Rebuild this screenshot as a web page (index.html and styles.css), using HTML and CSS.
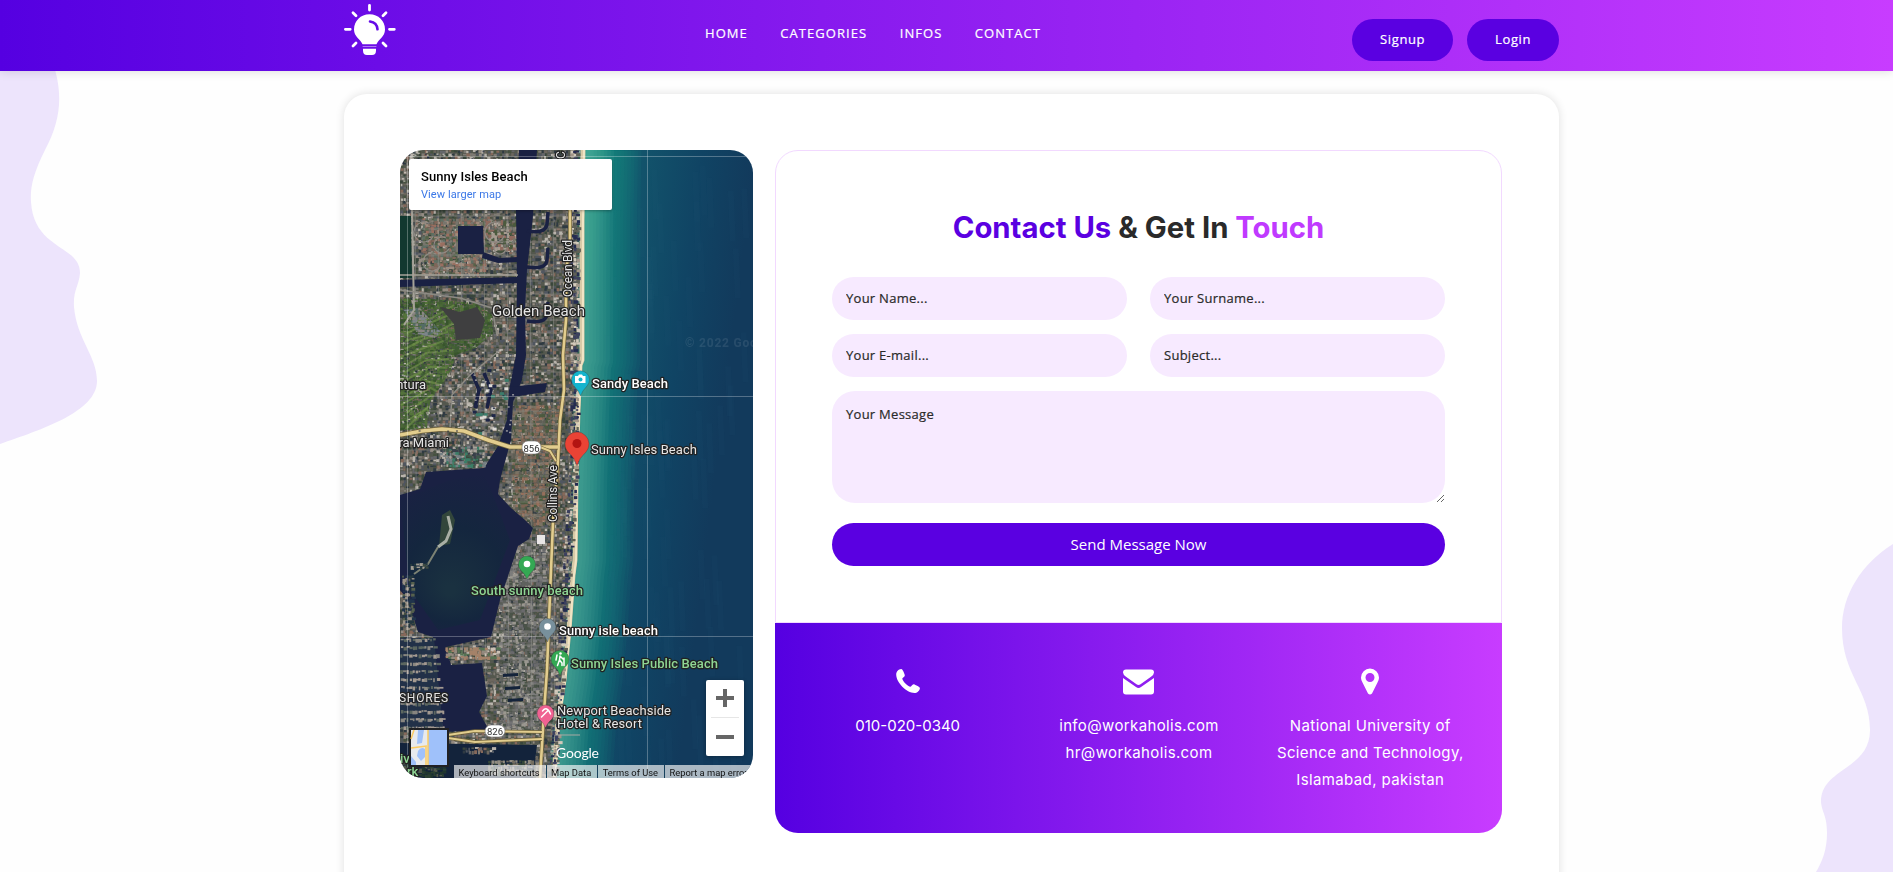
FILE: index.html
```html
<!DOCTYPE html>
<html lang="en">
<head>
<meta charset="utf-8">
<title>Contact Us</title>
<link rel="stylesheet" href="styles.css">
</head>
<body>
<svg class="blobs" viewBox="0 0 1893 872" aria-hidden="true">
  <path d="M0 60H52C63 92 62 118 45 150C33 174 30 188 31 202C34 250 80 245 80 273C79 286 73 290 74 307C77 340 97 356 97 381C97 412 40 430 0 444Z"/>
  <path d="M1893 544C1860 565 1842 596 1842 628C1842 675 1870 690 1870 730C1870 770 1821 768 1821 802C1822 813 1827 815 1827 833C1827 850 1822 862 1816 872H1893Z"/>
</svg>
<header class="header">
  <div class="header-inner">
    <svg class="logo" viewBox="0 0 52 58" aria-label="Logo">
      <g stroke="#fff" stroke-width="2.8" stroke-linecap="round">
        <path d="M25.500 5.300V10M9 12.800L12 15.800M42 12.800L39 15.800M1.400 29.300H6.200M45.500 29.300H50.300M9 46L12 43M42 46L39 43"/>
      </g>
      <path fill="#fff" d="M25.500 14.300C16.500 14.300 10 21 10 29.500C10 37 16.500 39 18.500 44.300H32.500C34.500 39 41 37 41 29.500C41 21 34.500 14.300 25.500 14.300ZM19 48.700H32V50.500Q32 55 28 55H23Q19 55 19 50.500Z"/>
      <path d="M18.600 46.500H32.400" stroke="#fff" stroke-opacity=".45" stroke-width="1"/>
      <path d="M26 21.500Q33 22.500 33.500 29.300" fill="none" stroke="#650ae7" stroke-width="2.600" stroke-linecap="round"/>
    </svg>
    <nav class="nav"><a>HOME</a><a>CATEGORIES</a><a>INFOS</a><a>CONTACT</a></nav>
    <div class="actions"><a class="pill">Signup</a><a class="pill">Login</a></div>
  </div>
</header>
<main class="card">
  <section class="map">
    <canvas class="terrain" id="terrain" width="353" height="628"></canvas>
    <svg class="overlay" viewBox="0 0 353 628">
      <path class="grid" d="M0 6.500H353M0 246.500H353M0 486.500H353M7.500 0V628M247.500 0V628"/>
      <g class="label">
        <text x="92" y="166" font-size="15" textLength="93">Golden Beach</text>
        <text transform="translate(172 147) rotate(-90)" font-size="12" textLength="57">Ocean Blvd</text>
        <text transform="translate(165 9) rotate(-90)" font-size="12">C</text>
        <text transform="translate(157 372) rotate(-90)" font-size="12" textLength="57">Collins Ave</text>
        <text x="26" y="239" text-anchor="end">ntura</text>
        <text x="49" y="297" text-anchor="end">ra Miami</text>
        <text x="49" y="552" text-anchor="end" font-size="12" letter-spacing=".8">SHORES</text>
        <text class="strong" x="192" y="238" textLength="76">Sandy Beach</text>
        <text x="191" y="304" textLength="106">Sunny Isles Beach</text>
        <text class="park" x="71" y="445" textLength="112">South sunny beach</text>
        <text class="strong" x="159" y="485" textLength="99">Sunny isle beach</text>
        <text class="park" x="171" y="518" textLength="147">Sunny Isles Public Beach</text>
        <text x="157" y="565" textLength="114">Newport Beachside</text>
        <text x="157" y="578" textLength="85">Hotel &amp; Resort</text>
        <text class="park" x="0" y="613">iv</text>
        <text class="park" x="7" y="626">rk</text>
      </g>
      <text class="watermark" x="285" y="197">© 2022 Goo</text>
      <g class="shield"><rect x="122" y="291" width="19" height="13" rx="6"/><text x="131.500" y="301.500">856</text><rect x="85" y="575" width="20" height="12" rx="6"/><text x="95" y="585">826</text></g>
      <g stroke="#333" stroke-opacity=".5" stroke-width=".6">
        <path fill="#14b4cd" d="M180.500 246Q179 241 174 236A9 9 0 1 1 187 236Q182 241 180.500 246Z"/>
        <path fill="#ea4335" d="M177 316Q175 308 168 302A12 12 0 1 1 186 302Q179 308 177 316Z"/>
        <path fill="#34a853" d="M127 429Q125 424 120.500 420A8.500 8.500 0 1 1 133.500 420Q129 424 127 429Z"/>
        <path fill="#78909c" d="M147.500 492Q146 487 141 482.500A8.500 8.500 0 1 1 154 482.500Q149 487 147.500 492Z"/>
        <path fill="#34a853" d="M160 526Q158.500 520 153.500 515.500A9 9 0 1 1 166.500 515.500Q161.500 520 160 526Z"/>
        <path fill="#f06292" d="M145.500 578Q144 573 139 569A8.500 8.500 0 1 1 152 569Q147 573 145.500 578Z"/>
      </g>
      <circle cx="177" cy="293.500" r="4.500" fill="#b31412"/>
      <circle cx="127" cy="414" r="3.300" fill="#fff"/><circle cx="147.500" cy="476.500" r="3.300" fill="#fff"/>
      <path fill="#fff" d="M175 226H178L179 224.500H182L183 226H185.500V233H175Z"/><circle cx="180.500" cy="229.500" r="2" fill="#14b4cd"/>
      <g fill="none" stroke="#fff" stroke-width="1.500" stroke-linecap="round"><path d="M160 506L159.500 510L162 513V515.500M159.500 510L157.500 515.500M160 506L163 509M164 508V515.500M157 505L156 510"/><path d="M141.500 567L147.500 561M142.500 561Q147 555.500 150.500 564"/></g>
      <circle cx="160.500" cy="503.500" r="1.300" fill="#fff"/>
      <text class="google" x="156" y="608" textLength="43">Google</text>
      <g class="thumb"><rect x="10" y="579" width="38" height="37" fill="#9fc1fa" stroke="#202124" stroke-width="2"/><path fill="#e8eaed" d="M11 580H28V615H11Z"/><path fill="#9fc1fa" d="M18 580H24L22 593L17 594ZM18 601Q21 596 25 599V607L21 611L17 606ZM11 606L16 612V615H11Z"/><path fill="none" stroke="#fbcb62" stroke-width="1.500" d="M28 580V615M11 598L27 596M14 580L11 589M26 597V615"/></g>
    </svg>
    <div class="place"><strong>Sunny Isles Beach</strong><a>View larger map</a></div>
    <div class="zoom"><i class="plus"></i><hr><i class="minus"></i></div>
    <div class="legal"><span>Keyboard shortcuts</span><span>Map Data</span><span>Terms of Use</span><span>Report a map error</span></div>
  </section>
  <section class="contact">
    <form class="form">
      <h2 class="title"><span class="violet">Contact Us</span> &amp; Get In <span class="pink">Touch</span></h2>
      <div class="fields">
        <input placeholder="Your Name..."><input placeholder="Your Surname...">
        <input placeholder="Your E-mail..."><input placeholder="Subject...">
        <textarea placeholder="Your Message"></textarea>
      </div>
      <button class="send" type="button">Send Message Now</button>
    </form>
    <div class="info">
      <div class="info-item">
        <svg viewBox="0 0 24 24"><path d="M.2 5.500C.2 3 2.500.1 5.200.1C6.700.1 8.800 5.500 8.800 6.400C8.800 8 6.300 8.500 6.300 9.500C6.300 12 12 17.700 14.500 17.700C15.500 17.700 16 15.200 17.600 15.200C18.500 15.200 23.900 17.900 23.900 18.900C23.900 21.800 21 23.900 18.500 23.900C10.500 23.900.2 13.500.2 5.500Z"/></svg>
        <p class="phone">010-020-0340</p>
      </div>
      <div class="info-item">
        <svg class="mail" viewBox="0 0 31 25"><path d="M0 8.500L13 17.600Q15.500 19.300 18 17.600L31 8.500V22Q31 25 28 25H3Q0 25 0 22ZM3 0H28Q31 0 31 3Q31 5 28 7.300L17.500 14.700Q15.500 16.300 13.500 14.700L3 7.300Q0 5 0 3Q0 0 3 0Z"/></svg>
        <p class="email">info@workaholis.com<br>hr@workaholis.com</p>
      </div>
      <div class="info-item">
        <svg class="pin" viewBox="0 0 18 26"><path fill-rule="evenodd" d="M9 0A9 9 0 0 0 0 9C0 11 1 13 1.500 14L7 25Q9 27 11 25L16.500 14C17 13 18 11 18 9A9 9 0 0 0 9 0ZM9 4.500A4.500 4.500 0 1 1 9 13.500A4.500 4.500 0 0 1 9 4.500Z"/></svg>
        <p class="address">National University of<br>Science and Technology,<br>Islamabad, pakistan</p>
      </div>
    </div>
  </section>
</main>
<script src="terrain.js"></script>
</body>
</html>
```
FILE: styles.css
```css
* { box-sizing: border-box; }
body { margin: 0; height: 872px; overflow: hidden; background: #fefefe; font-family: "Open Sans", sans-serif; position: relative; }
.blobs { position: absolute; inset: 0; width: 1893px; height: 872px; fill: #ede4fc; }
.header { position: relative; height: 71px; background: linear-gradient(90deg, #5500e1 0%, #c83cff 100%); box-shadow: 0 0 10px rgba(0,0,0,.15); }
.header-inner { width: 1215px; margin-left: 344px; display: flex; align-items: flex-start; }
.logo { width: 52px; height: 58px; }
.nav { display: flex; gap: 32.500px; margin-left: 309px; padding-top: 23px; color: #fff; font-size: 13px; line-height: 20px; font-weight: 500; letter-spacing: 1.050px; -webkit-text-stroke: .2px #fff; }
.actions { display: flex; gap: 14px; margin-left: auto; padding-top: 19px; }
.pill { height: 42px; padding: 0 28px; border-radius: 23px; background: #5a00e1; color: #fff; font-size: 13px; font-weight: 500; line-height: 40px; letter-spacing: .6px; -webkit-text-stroke: .2px #fff; }
.card { position: relative; width: 1215px; height: 900px; margin: 23px 0 0 344px; padding: 56px; border-radius: 23px; background: #fff; box-shadow: 0 0 10px rgba(0,0,0,.12); display: flex; gap: 22px; align-items: flex-start; }
.map { position: relative; width: 353px; height: 628px; border-radius: 23px; overflow: hidden; font-family: Roboto, sans-serif; }
.terrain { display: block; }
.overlay { position: absolute; inset: 0; width: 353px; height: 628px; }
.grid { stroke: rgba(255,255,255,.28); fill: none; }
.label { fill: #e6e6e6; stroke: #222; stroke-width: 2.5px; paint-order: stroke; stroke-linejoin: round; font-size: 13px; }
.strong { fill: #fff; font-weight: 500; }
.park { fill: #8fd694; font-weight: 500; }
.watermark { fill: #fff; opacity: .09; font-size: 12px; font-weight: 700; letter-spacing: .8px; }
.shield rect { fill: #fff; stroke: #777; stroke-width: .6px; }
.shield text { font-size: 9.500px; text-anchor: middle; fill: #333; }
.google { fill: #fff; font: 14px Lato, sans-serif; }
.place { position: absolute; left: 9px; top: 9px; width: 203px; height: 51px; padding: 9px 12px; background: #fff; border-radius: 2px; box-shadow: 0 1px 3px rgba(0,0,0,.3); display: flex; flex-direction: column; }
.place strong { font-size: 13px; line-height: 17px; font-weight: 500; color: #000; letter-spacing: .05px; }
.place a { font-size: 11px; line-height: 19px; color: #3b78e7; letter-spacing: .08px; }
.zoom { position: absolute; left: 306px; top: 530px; width: 38px; height: 76px; padding: 9px 5px 10px; border-radius: 2px; background: #fff; box-shadow: 0 1px 4px rgba(0,0,0,.3); display: flex; flex-direction: column; justify-content: space-between; align-items: center; }
.zoom hr { width: 28px; margin: 0; border: 0; border-top: 1px solid #e6e6e6; }
.plus, .minus { width: 18px; height: 18px; background: linear-gradient(#666,#666) center/18px 4px no-repeat; }
.plus { background: linear-gradient(#666,#666) center/18px 4px no-repeat, linear-gradient(#666,#666) center/4px 18px no-repeat; }
.legal { position: absolute; left: 54px; top: 615px; right: 0; height: 13px; display: flex; white-space: nowrap; overflow: hidden; font-size: 9.350px; line-height: 15px; color: #111; background: rgba(245,245,245,.68); }
.legal span { padding: 0 6px 0 4.500px; border-right: 1px solid #16415c; }
.contact { width: 727px; }
.form { height: 473px; border: 1px solid #f2d9ff; border-radius: 23px 23px 0 0; padding: 56px 56px 0; }
.title { margin: 0 0 30px; height: 40px; text-align: center; font: 700 29.300px/41px Inter, sans-serif; color: #2a2a2a; white-space: nowrap; }
.violet { color: #5a00e1; }
.pink { color: #c03aff; }
.fields { display: grid; grid-template-columns: 295px 295px; gap: 14px 23px; }
.fields input, .fields textarea { width: 100%; height: 43px; border: 0; border-radius: 23px; padding: 0 14px 2px; background: #f7eaff; color: #2a2a2a; font: 500 13px "Open Sans", sans-serif; letter-spacing: .27px; }
.fields textarea { grid-column: span 2; height: 112px; padding: 14px; display: block; }
.fields ::placeholder { color: #2a2a2a; opacity: 1; -webkit-text-stroke: .2px #2a2a2a; }
.send { display: block; width: 100%; height: 43px; margin-top: 20px; padding-bottom: 3px; border: 0; border-radius: 23px; background: #5a00e1; color: #fff; font: 15px "Open Sans", sans-serif; }
.info { height: 210px; padding: 44px 16px 0 17px; display: grid; grid-template-columns: repeat(3, 1fr); border-radius: 0 0 23px 23px; background: linear-gradient(90deg, #5500e1 0%, #c83cff 100%); text-align: center; color: #fff; }
.info-item { display: flex; flex-direction: column; align-items: center; }
.info-item svg { width: 24px; height: 26px; margin-top: 1px; fill: #fff; }
.info-item .mail { width: 31px; height: 28px; }
.info-item .pin { width: 18px; height: 27px; }
.info-item p { margin: 0; padding-top: 18px; font: 15px/27px Inter, sans-serif; white-space: nowrap; }
.info-item .email { padding-top: 16px; letter-spacing: .37px; }
.info-item .address { padding-top: 17px; letter-spacing: .38px; }
```
FILE: terrain.js
```js
const ctx = document.getElementById('terrain').getContext('2d');
let seed = 7;
const rnd = () => (seed = (seed * 16807) % 2147483647) / 2147483647;
const pick = list => list[Math.floor(rnd() * list.length)];
const trace = (pts, close) => {
  ctx.beginPath();
  pts.forEach(([x, y], i) => i ? ctx.lineTo(x, y) : ctx.moveTo(x, y));
  if (close) ctx.closePath();
};
const fill = (color, pts) => { trace(pts, true); ctx.fillStyle = color; ctx.fill(); };
const line = (color, width, pts) => {
  trace(pts); ctx.strokeStyle = color; ctx.lineWidth = width; ctx.lineJoin = 'round'; ctx.stroke();
};
// Small rooftops, trees and pavements
const roofs = ['#7f7b74', '#6c665e', '#948b82', '#54584e', '#46523f', '#65666a', '#39463b', '#b9b4ac', '#86695b', '#505660', '#2f3a42'];
const blocks = (x0, y0, w, h, colors) => {
  for (let y = y0; y < y0 + h; y += 3)
    for (let x = x0; x < x0 + w; x += 3) {
      ctx.fillStyle = pick(colors);
      ctx.fillRect(x + rnd(), y + rnd(), 1.5 + rnd() * 3, 1.5 + rnd() * 2.5);
    }
};
ctx.fillStyle = '#55584f'; ctx.fillRect(0, 0, 353, 628);
blocks(0, 0, 190, 628, roofs);
blocks(22, 68, 62, 55, ['#9a6f60', '#7f675a', '#566449', '#77756c', '#a08b7c', '#5f6f63']);
blocks(85, 70, 31, 30, ['#8f6a5e', '#77756c', '#4c5b3e', '#a79c90']);
blocks(112, 255, 48, 120, ['#96705c', '#7d6453', '#4c5b3f', '#7b7263', '#5f5f55']);
blocks(100, 390, 45, 190, ['#7c7c7b', '#5f625e', '#4a5348', '#9a978f', '#6a6a6c']);
for (let y = 14; y < 628; y += 13) line('rgba(145,145,140,.5)', 1, [[y % 3 * 20, y], [165, y]]);
for (let x = 15; x < 165; x += 23) line('rgba(145,145,140,.5)', 1, [[x, 0], [x + 2, 628]]);
// Winding residential streets
for (const [x, y, r] of [[24, 82, 10], [42, 95, 8], [32, 112, 9], [95, 82, 10], [100, 98, 6]]) {
  ctx.beginPath(); ctx.arc(x, y, r, .4, 5.2); ctx.strokeStyle = '#908b85'; ctx.lineWidth = 1.2; ctx.stroke();
}
// Parks and golf course
fill('#12382f', [[0, 66], [11, 66], [12, 128], [0, 128]]);
const green = [[0, 148], [30, 149], [75, 153], [92, 165], [93, 184], [75, 198], [56, 205], [50, 222], [38, 240], [30, 252], [27, 278], [0, 281]];
ctx.save(); trace(green, true); ctx.clip();
blocks(0, 145, 100, 140, ['#456333', '#38552c', '#54743a', '#3f5c35', '#4b6837']);
for (let i = 0; i < 14; i++) line('rgba(125,160,80,.5)', 2, [[rnd() * 8, 175 + i * 8], [22 + rnd() * 16, 168 + i * 7], [42 + rnd() * 14, 155 + i * 9]]);
ctx.restore();
fill('#3f3f40', [[40, 157], [60, 162], [77, 157], [85, 170], [80, 188], [56, 190], [54, 174]]);
ctx.save(); trace([[4, 160], [20, 158], [41, 182], [35, 188], [18, 184]], true); ctx.clip();
blocks(0, 155, 45, 35, ['#7d858a', '#536b66', '#8a8683']); ctx.restore();
// Waterways
const water = '#1a2143';
fill(water, [[119, 0], [137, 0], [133, 65], [131, 85], [127, 120], [125, 160], [126, 205], [122, 230], [113, 252], [111, 290], [100, 330], [98, 344], [111, 358], [125, 370], [133, 378], [129, 389], [118, 396], [112, 414], [100, 450], [91, 487], [46, 497], [51, 515], [82, 513], [87, 546], [79, 562], [89, 580], [43, 582], [33, 487], [18, 482], [8, 450], [0, 440], [0, 345], [20, 339], [26, 322], [84, 318], [98, 296], [107, 270], [109, 240], [116, 205], [117, 130], [116, 60]]);
const lagoon = ctx.createRadialGradient(50, 440, 5, 60, 410, 90);
lagoon.addColorStop(0, '#1a3140'); lagoon.addColorStop(.5, '#14263e'); lagoon.addColorStop(1, '#1a2143');
fill(lagoon, [[0, 350], [50, 330], [85, 325], [95, 350], [110, 390], [80, 470], [38, 480], [10, 440]]);
fill(water, [[58, 76], [83, 76], [84, 104], [58, 104]]);
fill(water, [[0, 130], [118, 127], [118, 133], [0, 137]]);
fill(water, [[83, 102], [100, 108], [118, 107], [118, 112], [98, 113], [82, 108]]);
fill(water, [[110, 237], [147, 233], [145, 242], [113, 247]]);
// Hooked inlets east of the channel
for (const y of [62, 98, 152]) {
  ctx.beginPath(); ctx.moveTo(127, y + 19); ctx.quadraticCurveTo(146, y + 22, 147, y + 12); ctx.lineTo(148, y);
  ctx.strokeStyle = water; ctx.lineWidth = 3.5; ctx.stroke();
}
for (const x of [72, 84]) line(water, 3.5, [[x, 223], [x + 7, 240], [x + 3, 258]]);
for (let i = 0; i < 26; i++) { ctx.fillStyle = pick(['#1e2748', '#dcdad5', '#3d7d6c']); ctx.fillRect(72 + rnd() * 34, 215 + rnd() * 68, 4, 3); }
fill('#13233b', [[0, 593], [137, 595], [133, 628], [0, 628]]);
blocks(62, 597, 32, 5, roofs); blocks(88, 610, 45, 13, ['#344638', '#746e61', '#928d82']); blocks(0, 606, 44, 20, ['#20362f', '#2b4132', '#53594c']);
// Shoreline neighbourhoods around the lagoon
blocks(40, 296, 45, 20, ['#758084', '#3e584b', '#3b7d67', '#a8a29b', '#39414b']);
blocks(2, 425, 12, 52, ['#9a9286', '#56614e', '#243740', '#20344c']);
fill('#223148', [[0, 488], [34, 488], [43, 578], [0, 578]]);
for (let y = 488; y < 578; y += 8) blocks(0, y, 35 + (y - 488) / 10, 3, ['#888680', '#5c6760', '#a49a91']);
for (const [x, y] of [[103, 524], [105, 537], [108, 549]]) fill('#14233a', [[x, y], [x + 15, y - 1], [x + 15, y + 2], [x, y + 3]]);
blocks(45, 497, 52, 10, ['#cbc0b5', '#938a7f', '#557453', '#a48269']);
fill('#32463b', [[42, 365], [50, 360], [55, 370], [50, 394], [39, 396]]);
line('#a9afa4', 3, [[48, 366], [51, 379], [46, 391], [38, 397]]);
line('#7c8274', 2, [[38, 397], [28, 414], [14, 424]]);
blocks(10, 413, 18, 6, ['#3d4b43', '#a29d92', '#263b40']);
// Sea, beach and shallow water
const coast = [[183, 0], [182, 70], [182, 210], [180, 215], [178, 260], [176, 330], [175, 410], [173, 425], [169, 480], [164, 530], [158, 570], [154, 628]];
const sea = ctx.createLinearGradient(175, 0, 353, 22);
[[0, '#56a390'], [.06, '#2a9486'], [.15, '#168079'], [.22, '#136670'], [.38, '#12536b'], [.7, '#104464'], [1, '#123a5c']].forEach(([p, c]) => sea.addColorStop(p, c));
fill(sea, [...coast, [353, 628], [353, 0]]);
for (let i = 16; i > 0; i--) {
  ctx.globalAlpha = .09;
  line(i > 8 ? '#148e84' : '#62bfa5', i * 4, coast.map(([x, y]) => [x + 4 + i * 1.4, y]));
}
ctx.globalAlpha = 1;
line('#d8caa7', 5, coast);
line('#f1e4c5', 2, coast.map(([x, y]) => [x + 1, y]));
for (let y = 0; y < 625; y += 7) {
  const x = 170 - Math.max(0, y - 300) * .065;
  blocks(x, y, 7, 4, ['#d2c9ba', '#a09588', '#3c405f', '#5f6156', '#252c50']);
}
for (let i = 0; i < 90; i++) {
  const x = 205 + rnd() * 140, y = rnd() * 600;
  line('rgba(70,140,150,.03)', 6, [[x, y], [x + 2, y + 50]]);
}
// Roads
line('#a5a298', 2, [[12, 60], [14, 160], [4, 175]]);
line('#a5a298', 1.5, [[0, 125], [118, 125]]);
line('#8d8b84', 1.5, [[0, 140], [60, 148], [92, 158], [97, 185]]);
line('#8d8b84', 1.5, [[100, 200], [70, 225], [52, 245], [50, 278]]);
const road = (w, pts) => { line('#6f623b', w + 1.4, pts); line('#e2cd8e', w, pts); };
road(2.6, [[170, 60], [170, 95], [166, 120], [166, 170], [163, 205], [164, 240], [160, 270], [158, 310], [153, 372], [151, 420], [149, 470], [147, 520], [144, 562], [140, 628]]);
road(3.6, [[0, 285], [22, 281], [42, 279], [64, 281], [88, 290], [110, 297], [158, 297]]);
road(2, [[140, 297], [150, 301], [156, 311]]);
road(2, [[48, 585], [75, 581], [142, 582]]);
road(2, [[48, 588], [75, 592], [142, 589]]);
line('#a8aaa4', 1, [[155, 585], [180, 585]]);
// Scattered bright roofs
for (let i = 0; i < 260; i++) {
  const x = rnd() * 115, y = rnd() * 150;
  ctx.fillStyle = pick(['rgba(230,225,215,.6)', 'rgba(25,32,60,.6)']);
  ctx.fillRect(x, y < 60 ? y : y + 140, 2, 1.5);
}
fill('#e9e6e6', [[137, 385], [145, 385], [145, 394], [137, 394]]);
```
